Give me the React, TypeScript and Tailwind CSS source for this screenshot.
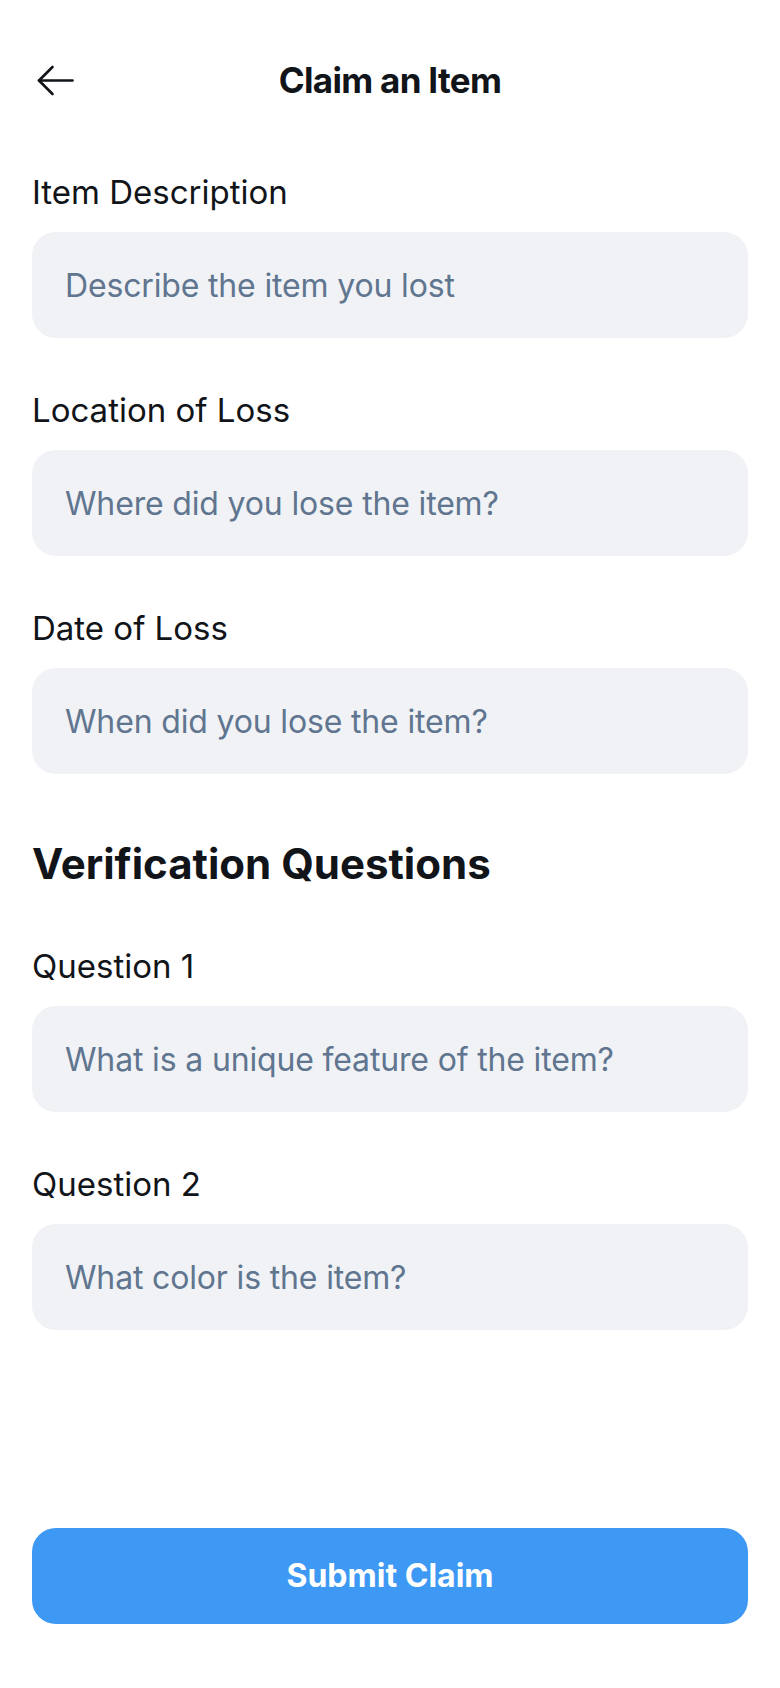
import React from "react";

function Field({ label, placeholder, first }: { label: string; placeholder: string; first?: boolean }) {
  return (
    <div className={first ? "flex flex-col" : "mt-[52px] flex flex-col"}>
      <label className="text-[33px] leading-[40px] text-[#111418] font-normal">{label}</label>
      <input
        type="text"
        placeholder={placeholder}
        className="mt-[20px] h-[106px] w-full rounded-[24px] bg-[#f0f2f5] px-[33px] text-[32px] text-[#111418] placeholder:text-[#60758f] outline-none tracking-[-0.005em]"
      />
    </div>
  );
}

export default function App() {
  return (
    <div
      className="flex min-h-[1688px] w-full flex-col bg-white px-[32px]"
      style={{ fontFamily: "Inter, 'Noto Sans', sans-serif" }}
    >
      <header className="mt-[52px] grid h-[56px] grid-cols-[1fr_auto_1fr] items-center">
        <button className="flex h-[40px] w-[44px] items-center justify-start pl-[5px]" aria-label="Back">
          <svg width="37" height="31" viewBox="0 0 37 31" fill="none">
            <path d="M2 15.5H35.5" stroke="#111418" strokeWidth="2.6" strokeLinecap="round" />
            <path d="M15.5 2L2 15.5L15.5 29" stroke="#111418" strokeWidth="2.6" strokeLinecap="round" strokeLinejoin="round" />
          </svg>
        </button>
        <h1 className="text-[35px] font-bold leading-[44px] tracking-[-0.02em] text-[#111418]">Claim an Item</h1>
        <div />
      </header>

      <div className="mt-[64px] flex flex-col">
        <Field first label="Item Description" placeholder="Describe the item you lost" />
        <Field label="Location of Loss" placeholder="Where did you lose the item?" />
        <Field label="Date of Loss" placeholder="When did you lose the item?" />
      </div>

      <h2 className="mt-[66px] text-[42px] font-bold leading-[48px] text-[#111418]">
        Verification Questions
      </h2>

      <div className="mt-[58px] flex flex-col">
        <Field first label="Question 1" placeholder="What is a unique feature of the item?" />
        <Field label="Question 2" placeholder="What color is the item?" />
      </div>

      <div className="mt-auto mb-[64px] pt-[40px]">
        <button className="flex h-[96px] w-full items-center justify-center rounded-[24px] bg-[#3e99f4] text-[32px] font-bold text-white">
          Submit Claim
        </button>
      </div>
    </div>
  );
}
